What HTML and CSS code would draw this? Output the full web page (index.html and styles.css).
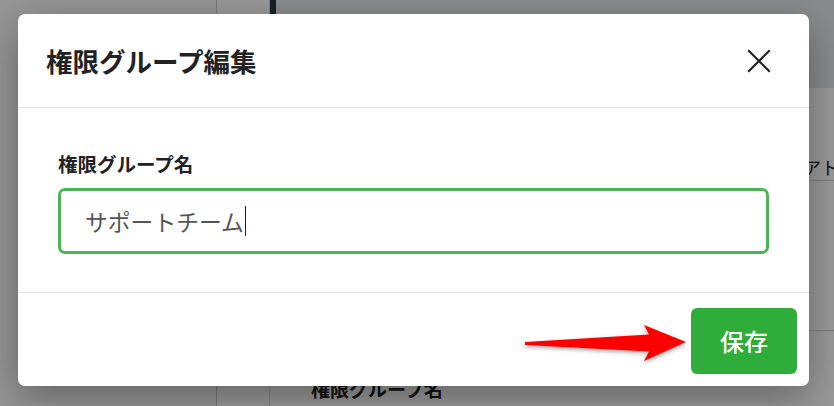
FILE: index.html
```html
<!DOCTYPE html>
<html lang="ja">
<head>
<meta charset="utf-8">
<link rel="stylesheet" href="styles.css">
</head>
<body>
<div class="page">
  <aside class="side"></aside>
  <div class="rail"></div>
  <main class="main">
    <div class="topbar"><span class="tab-mark"></span></div>
    <div class="row row-b"><span class="cell-text">アト</span></div>
    <div class="row row-c"></div>
    <div class="row row-d"><span class="bottom-label">権限グループ名</span></div>
  </main>
</div>
<div class="overlay"></div>

<div class="modal">
  <div class="modal-header">
    <h2 class="modal-title">権限グループ編集</h2>
    <button class="close-btn" aria-label="閉じる">
      <svg width="24" height="24" viewBox="0 0 24 24"><path d="M2 2 L22 22 M22 2 L2 22" stroke="#222" stroke-width="2.2" fill="none" stroke-linecap="square"/></svg>
    </button>
  </div>
  <div class="modal-body">
    <label class="field-label">権限グループ名</label>
    <div class="input"><span class="input-text">サポートチーム</span><span class="caret"></span></div>
  </div>
  <div class="modal-footer">
    <button class="save-btn">保存</button>
  </div>
</div>

<svg class="arrow" width="190" height="60" viewBox="0 0 190 60">
  <defs>
    <filter id="sh" x="-10%" y="-30%" width="130%" height="170%">
      <feDropShadow dx="0" dy="2" stdDeviation="2" flood-color="#000" flood-opacity="0.35"/>
    </filter>
  </defs>
  <path d="M7 28 L131 20.5 L126 11 L168 28 L126 47 L131 37.5 L7 31 Z" fill="#ff0000" filter="url(#sh)"/>
</svg>
</body>
</html>
```
FILE: styles.css
```css
* { box-sizing: border-box; }
html, body { margin: 0; padding: 0; }
body {
  width: 834px;
  height: 406px;
  overflow: hidden;
  position: relative;
  font-family: "Noto Sans CJK JP", "Noto Sans", sans-serif;
  background: #fff;
}
.page {
  display: flex;
  height: 406px;
}
.side {
  width: 217px;
  border-right: 1px solid #c8c8c8;
  background: #fafafa;
}
.rail {
  width: 53px;
  border-right: 1px solid #d6d6d6;
  background: #fff;
}
.main {
  flex: 1;
  display: flex;
  flex-direction: column;
  overflow: hidden;
}
.topbar {
  height: 88px;
  background: #e6e8ea;
  position: relative;
}
.tab-mark {
  position: absolute;
  left: -1px;
  top: 0;
  width: 7px;
  height: 16px;
  background: #1f3a4a;
}
.row { border-bottom: 1px solid #cfcfcf; position: relative; }
.row-b { height: 93px; }
.row-c { height: 150px; }
.row-d { flex: 1; border-bottom: none; }
.cell-text {
  position: absolute;
  left: 533px;
  top: 66px;
  font-size: 18px;
  color: #222;
  white-space: nowrap;
}
.bottom-label {
  position: absolute;
  left: 41px;
  top: 44px;
  font-size: 19px;
  font-weight: 700;
  color: #222;
  white-space: nowrap;
}
.overlay {
  position: absolute;
  inset: 0;
  background: rgba(0,0,0,0.4);
}
.modal {
  position: absolute;
  left: 18px;
  top: 14px;
  width: 791px;
  height: 372px;
  background: #fff;
  border-radius: 7px;
  box-shadow: 0 12px 40px rgba(0,0,0,0.35);
  display: flex;
  flex-direction: column;
}
.modal-header {
  height: 94px;
  border-bottom: 1px solid #e2e2e2;
  display: flex;
  align-items: center;
  justify-content: space-between;
  padding: 0 38px 0 28px;
}
.modal-title {
  margin: 0;
  font-size: 26.5px;
  font-weight: 700;
  color: #222;
  line-height: 34px;
}
.close-btn {
  border: none;
  background: none;
  padding: 0;
  width: 24px;
  height: 24px;
  display: flex;
}
.modal-body {
  height: 185px;
  border-bottom: 1px solid #e2e2e2;
  padding: 42px 40px 0 40px;
}
.field-label {
  display: block;
  font-size: 19.5px;
  font-weight: 700;
  color: #222;
  line-height: 28px;
  margin-bottom: 10px;
}
.input {
  height: 66px;
  border: 3px solid #4cb553;
  border-radius: 7px;
  display: flex;
  align-items: center;
  padding-left: 24px;
}
.input-text {
  font-size: 22.8px;
  color: #555;
}
.caret {
  width: 1px;
  height: 30px;
  background: #222;
  margin-left: 1px;
}
.modal-footer {
  flex: 1;
  display: flex;
  justify-content: flex-end;
  align-items: center;
  padding-right: 12px;
}
.save-btn {
  width: 106px;
  height: 66px;
  border: none;
  border-radius: 6px;
  background: #2ead3b;
  color: #fff;
  font-family: "Noto Sans CJK JP", sans-serif;
  font-size: 24px;
  font-weight: 500;
  margin-top: 2px;
}
.arrow {
  position: absolute;
  left: 518px;
  top: 314px;
}
```
